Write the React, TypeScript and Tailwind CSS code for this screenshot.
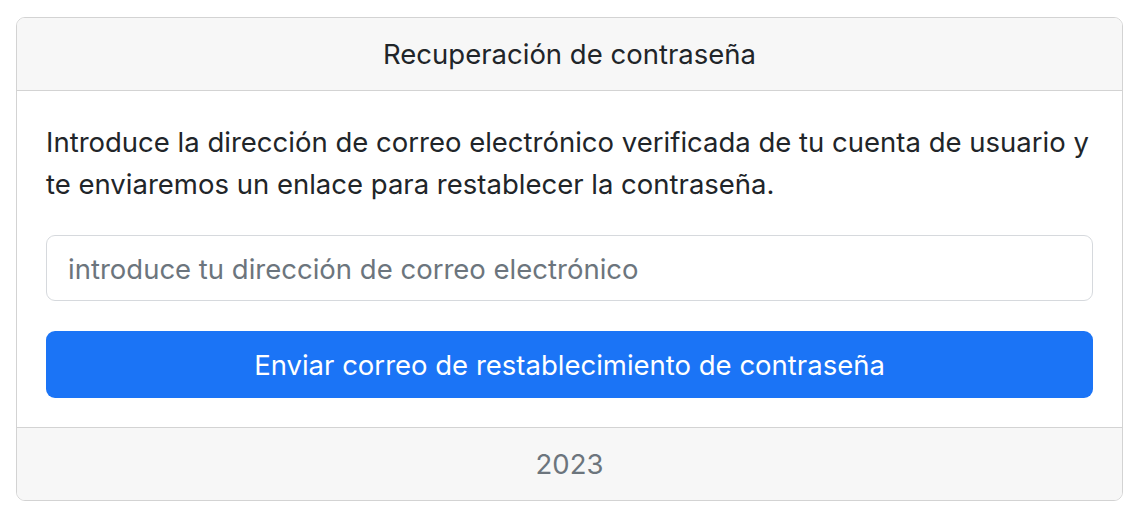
import React from 'react';

export default function App() {
  return (
    <div className="min-h-[520px] bg-white pt-[17px] pl-4" style={{ fontFamily: 'Inter, "Noto Sans", sans-serif' }}>
      <div className="w-[1107px] overflow-hidden rounded-[9px] border border-[#d3d3d3] bg-white">
        {/* Header */}
        <div className="flex h-[73px] items-center justify-center border-b border-[#d3d3d3] bg-[#f7f7f7] pt-[2px] text-[27.5px] text-[#212529]">
          Recuperación de contraseña
        </div>

        {/* Body */}
        <div className="px-[29px] pt-[30px] pb-[29px]">
          <p className="mb-[30px] text-[27.5px] leading-[42px] text-[#212529]">
            Introduce la dirección de correo electrónico verificada de tu cuenta de usuario y te enviaremos un enlace para restablecer la contraseña.
          </p>
          <input
            type="email"
            placeholder="introduce tu dirección de correo electrónico"
            className="block h-[66px] w-full rounded-[9px] border border-[#d6d9dd] bg-white px-[21px] pt-[2px] text-[27.5px] text-[#212529] outline-none placeholder:text-[#6c757d]"
          />
          <button className="mt-[30px] flex h-[67px] w-full items-center justify-center rounded-[9px] bg-[#1b74f6] pt-[2px] text-[27.5px] text-white">
            Enviar correo de restablecimiento de contraseña
          </button>
        </div>

        {/* Footer */}
        <div className="flex h-[73px] items-center justify-center border-t border-[#d3d3d3] bg-[#f7f7f7] pt-[2px] text-[27.5px] text-[#6c757d]">
          2023
        </div>
      </div>
    </div>
  );
}
